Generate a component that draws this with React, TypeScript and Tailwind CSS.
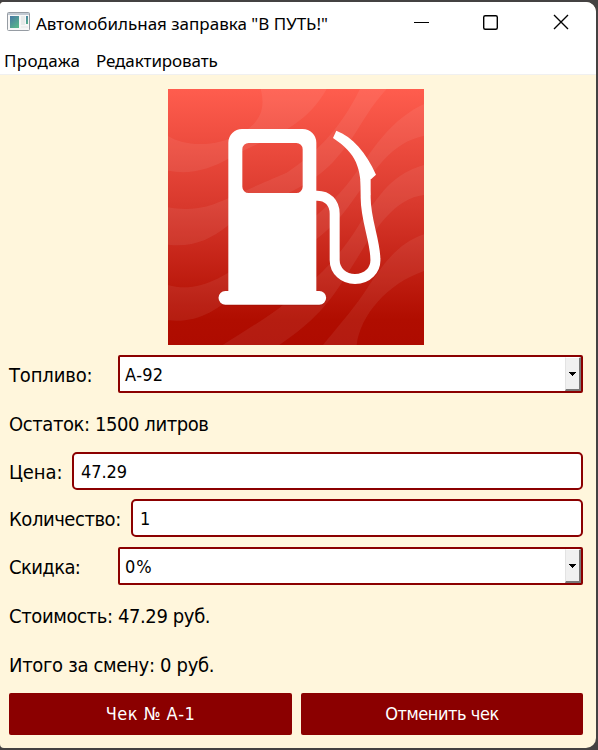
import type { ReactNode } from 'react';

function Label({ children, className = '' }: { children: ReactNode; className?: string }) {
  return <span className={`h-[38px] shrink-0 whitespace-nowrap text-[20px] leading-10 ${className}`}>{children}</span>;
}

function Select({ value, tracking }: { value: string; tracking: string }) {
  return (
    <div className="flex h-[38px] w-[465px] items-stretch justify-between rounded-[2px] border-2 border-[#8b0000] bg-white pl-[5px]">
      <span className={`h-[34px] text-[18px] leading-9 ${tracking}`}>{value}</span>
      <span className="flex w-4 items-center justify-center border-t border-r-2 border-b-2 border-l border-t-white border-r-[#777] border-b-[#777] border-l-[#e3e3e3] bg-[#f0f0f0]">
        <svg width="7" height="4" viewBox="0 0 7 4" shapeRendering="crispEdges"><path d="M0 0h7v1H6v1H5v1H4v1H3V3H2V2H1V1H0z" /></svg>
      </span>
    </div>
  );
}

function PumpPicture() {
  return (
    <svg className="ml-[168px] block size-64" viewBox="24 27 768 768">
      <defs>
        <linearGradient id="red" x1="0" y1="0" x2="0" y2="1">
          <stop offset="0" stopColor="#ff5d4e" />
          <stop offset="0.45" stopColor="#d9392d" />
          <stop offset="0.9" stopColor="#b00d00" />
          <stop offset="1" stopColor="#ae0b00" />
        </linearGradient>
      </defs>
      <path fill="url(#red)" d="M24 27h768v768H24z" />
      <g fill="#fff" fillOpacity="0.065">
        <path d="M302 27C318 88 298 130 245 158C165 205 75 199 24 168V272C85 284 145 272 215 231C300 180 430 155 500 27Z" />
        <path d="M600 27C540 145 480 210 380 278C280 320 230 345 175 367C125 390 70 390 24 382V494C95 503 150 480 202 438C290 370 430 340 520 245C590 172 610 103 680 27Z" />
        <path d="M792 72C700 115 650 190 590 275C500 405 380 475 270 530C190 595 110 640 24 615V721C110 730 175 693 235 630C330 555 470 510 565 380C650 265 690 190 792 167Z" />
        <path d="M792 255C700 280 660 340 600 430C515 570 430 625 355 686C290 732 235 765 188 795H358C440 740 500 685 560 585C630 475 690 357 792 345Z" />
        <path d="M792 463C705 492 660 567 610 642C570 700 525 750 489 795H590C602 705 680 612 792 573Z" />
      </g>
      <path fill="#7d0c04" fillOpacity="0.25" d="M196 668H478V677H196A20 20 0 0 1 178 660ZM478 677A20 20 0 0 0 498 658L478 668Z" />
      <path fill="#fff" fillRule="evenodd" d="M205 188A41 41 0 0 1 246 147H428A41 41 0 0 1 469 188V633H478A20.500 20.500 0 0 1 478 674H196A20.500 20.500 0 0 1 196 633H205ZM266 189A19 19 0 0 0 247 208V320A19 19 0 0 0 266 339H409A19 19 0 0 0 428 320V208A19 19 0 0 0 409 189Z" />
      <path fill="none" stroke="#fff" strokeWidth="30" d="M467 347C504 345 524 370 524 401V540C524 573 551 597 585 597C622 597 649 570 646 535C645 480 617 420 617 353V300" />
      <path fill="#fff" d="M529 152C577 170 619 218 648 284L628 302L631 345L603 351C604 263 590 221 519 174Z" />
    </svg>
  );
}

export default function App() {
  return (
    <div className="h-[750px] w-[598px] overflow-hidden bg-[#444242] pt-[2px] pr-[2px] pb-[2px] text-black">
      <main className="flex h-[746px] w-[596px] flex-col overflow-hidden rounded-tl-[4px] rounded-tr-[10px] rounded-br-[10px] rounded-bl-[4px] bg-[#fff6dc] font-['DejaVu_Sans_Condensed','DejaVu_Sans',sans-serif]">
        <header className="h-[73px] shrink-0 border-b border-[#f0f0f0] bg-white font-['Noto_Sans',sans-serif]">
          <div className="flex h-10 items-center">
            <svg className="ml-[7px] block shrink-0" width="23" height="20" viewBox="0 0 23 20">
              <defs><linearGradient id="pane" x2="0.7" y2="1"><stop stopColor="#4777a5" /><stop offset="1" stopColor="#58b58a" /></linearGradient></defs>
              <rect x="0.5" y="0.5" width="22" height="18" rx="1" fill="#f7f7f7" stroke="#969ca3" />
              <path d="M1 1h21v2H1z" fill="#c1c9d2" />
              <path d="M3 4h9v12H3z" fill="url(#pane)" />
              <path d="M14 4h4v9h-4z" fill="#e7eae9" /><path d="M19 4h2v8h-2z" fill="url(#pane)" /><path d="M14 14h7v2h-7z" fill="#eee" />
            </svg>
            <h1 className="ml-[6px] h-10 w-[340px] whitespace-nowrap text-[17px] leading-[43px]">Автомобильная заправка "В ПУТЬ!"</h1>
            <svg className="ml-[37px] block" width="160" height="20" viewBox="0 0 160 20" fill="none" stroke="#000" strokeWidth="1.4">
              <path d="M1 10.500h15" strokeWidth="1" /><rect x="70.700" y="3.700" width="13.600" height="13.600" rx="1.500" /><path d="M141 3l14 14M155 3l-14 14" />
            </svg>
          </div>
          <nav className="flex h-8 pl-1 text-[17px] leading-[38px]">
            <span className="w-[92px] tracking-[0.3px]">Продажа</span><span className="tracking-[-0.1px]">Редактировать</span>
          </nav>
        </header>
        <div className="pt-[14px] pb-[10px]"><PumpPicture /></div>
        <section className="flex flex-col pr-[13px] pl-[9px]">
          <div className="flex justify-between"><Label className="tracking-[-0.15px]">Топливо:</Label><Select value="А-92" tracking="tracking-[0.2px]" /></div>
          <Label className="mt-[11px] tracking-[-0.42px]">Остаток: 1500 литров</Label>
          <div className="mt-[10px] flex justify-between">
            <Label className="tracking-[-0.1px]">Цена:</Label>
            <div className="h-[38px] w-[511px] rounded-[5px] border-2 border-[#8b0000] bg-white pl-[7px] text-[18px] leading-9 tracking-[-0.1px]">47.29</div>
          </div>
          <div className="mt-[9px] flex justify-between">
            <Label className="tracking-[-0.45px]">Количество:</Label>
            <div className="h-[38px] w-[452px] rounded-[5px] border-2 border-[#8b0000] bg-white pl-[7px] text-[18px] leading-9">1</div>
          </div>
          <div className="mt-[10px] flex justify-between"><Label className="tracking-[-0.6px]">Скидка:</Label><Select value="0%" tracking="tracking-[1px]" /></div>
          <Label className="mt-[11px] tracking-[-0.38px]">Стоимость: 47.29 руб.</Label>
          <Label className="mt-[11px] tracking-[-0.32px]">Итого за смену: 0 руб.</Label>
          <div className="mt-[10px] flex gap-[9px] text-[18px] leading-[42px] text-white">
            <button className="h-[42px] w-[283px] rounded-[2px] bg-[#8b0000] tracking-[0.5px]">Чек № А-1</button>
            <button className="h-[42px] w-[282px] rounded-[2px] bg-[#8b0000] tracking-[-0.45px]">Отменить чек</button>
          </div>
        </section>
      </main>
    </div>
  );
}
